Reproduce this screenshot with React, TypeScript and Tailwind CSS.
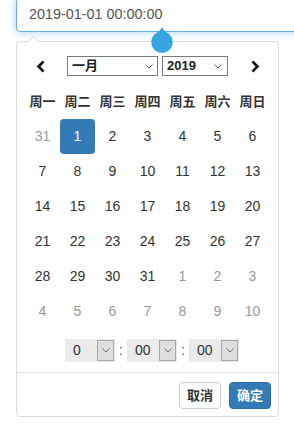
const weekdays = ["周一", "周二", "周三", "周四", "周五", "周六", "周日"];

type Day = { d: number; muted?: boolean; active?: boolean };

const buildDays = (): Day[] => {
  const days: Day[] = [{ d: 31, muted: true }];
  for (let i = 1; i <= 31; i++) days.push({ d: i, active: i === 1 });
  for (let i = 1; i <= 10; i++) days.push({ d: i, muted: true });
  return days;
};

const SmallChevron = () => (
  <svg width="8" height="5" viewBox="0 0 8 5" fill="none">
    <path d="M0.5 0.5 L4 4 L7.5 0.5" stroke="#6b6b6b" strokeWidth="1" />
  </svg>
);

const TimeSelect = ({ value }: { value: string }) => (
  <div className="flex items-center justify-between w-[50px] h-[23px] bg-[#ebebeb] pl-[8px] pr-[1px]">
    <span className="text-[14px] text-[#333]">{value}</span>
    <span className="flex items-center justify-center w-[17px] h-[21px] bg-[#dedede] border border-[#a8a8a8]">
      <SmallChevron />
    </span>
  </div>
);

const Drop = () => (
  <svg
    width="22"
    height="26"
    viewBox="0 0 22 26"
    className="absolute left-[151px] top-[27px]"
  >
    <path
      d="M11 0 C12 3 15 5 18.6 7.6 A10.7 10.7 0 1 1 3.4 7.6 C7 5 10 3 11 0 Z"
      fill="#35a4e0"
    />
  </svg>
);

const App = () => {
  const days = buildDays();
  return (
    <div className="relative w-[294px] h-[424px] overflow-hidden bg-white font-['Liberation_Sans','Noto_Sans_CJK_SC',sans-serif]">
      <div className="ml-[16px] mt-[-2px] w-[300px] h-[34px] flex items-center pl-[12px] border border-[#66afe9] rounded-[4px] shadow-[inset_0_1px_1px_rgba(0,0,0,0.075),0_0_8px_rgba(102,175,233,0.6)] text-[14.4px] text-[#555]">
        2019-01-01 00:00:00
      </div>

      <div className="relative ml-[16px] mt-[9px] w-[263px] border border-[#dcdcdc] rounded-[4px] bg-white">
        <div className="absolute top-[-5px] left-[12px] w-[9px] h-[9px] rotate-45 bg-white border-l border-t border-[#dcdcdc]" />

        <div className="pt-[14px] flex items-center h-[34px]">
          <button className="ml-[6px] w-[35px] flex justify-center">
            <svg width="10" height="13" viewBox="0 0 10 13" fill="none">
              <path d="M7.5 1.5 L2.5 6.5 L7.5 11.5" stroke="#111" strokeWidth="2.6" />
            </svg>
          </button>
          <div className="ml-[9px] w-[91px] h-[20px] border border-[#7a7a7a] flex items-center justify-between pl-[4px] pr-[4px]">
            <span className="text-[13px] font-bold text-[#222]">一月</span>
            <SmallChevron />
          </div>
          <div className="ml-[4px] w-[66px] h-[20px] border border-[#7a7a7a] flex items-center justify-between pl-[4px] pr-[5px]">
            <span className="text-[13px] font-bold text-[#222]">2019</span>
            <SmallChevron />
          </div>
          <button className="ml-[17px] w-[20px] flex justify-center">
            <svg width="10" height="13" viewBox="0 0 10 13" fill="none">
              <path d="M2.5 1.5 L7.5 6.5 L2.5 11.5" stroke="#111" strokeWidth="2.6" />
            </svg>
          </button>
        </div>

        <div className="mt-[8px] pl-[8px] grid grid-cols-[repeat(7,35px)]">
          {weekdays.map((w) => (
            <div key={w} className="h-[35px] flex items-center justify-center text-[13px] font-bold text-[#333]">
              {w}
            </div>
          ))}
          {days.map((day, i) => (
            <div key={i} className="h-[35px] flex items-center justify-center">
              <span
                className={`w-[35px] h-[35px] flex items-center justify-center rounded-[4px] text-[14px] ${
                  day.active
                    ? "bg-[#337ab7] text-white"
                    : day.muted
                    ? "text-[#999]"
                    : "text-[#333]"
                }`}
              >
                {day.d}
              </span>
            </div>
          ))}
        </div>

        <div className="mt-[10px] pb-[10px] pl-[48px] flex items-center">
          <TimeSelect value="0" />
          <span className="w-[12px] text-center text-[14px] text-[#555]">:</span>
          <TimeSelect value="00" />
          <span className="w-[12px] text-center text-[14px] text-[#555]">:</span>
          <TimeSelect value="00" />
        </div>

        <div className="border-t border-[#e0e0e0] pt-[9px] pb-[7px] pr-[7px] flex justify-end gap-[8px]">
          <button className="w-[42px] h-[27px] rounded-[4px] border border-[#ccc] bg-white text-[13px] font-bold text-[#333]">
            取消
          </button>
          <button className="w-[42px] h-[27px] rounded-[4px] border border-[#2e6da4] bg-[#337ab7] text-[13px] font-bold text-white">
            确定
          </button>
        </div>
      </div>

      <Drop />
    </div>
  );
};

export default App;
